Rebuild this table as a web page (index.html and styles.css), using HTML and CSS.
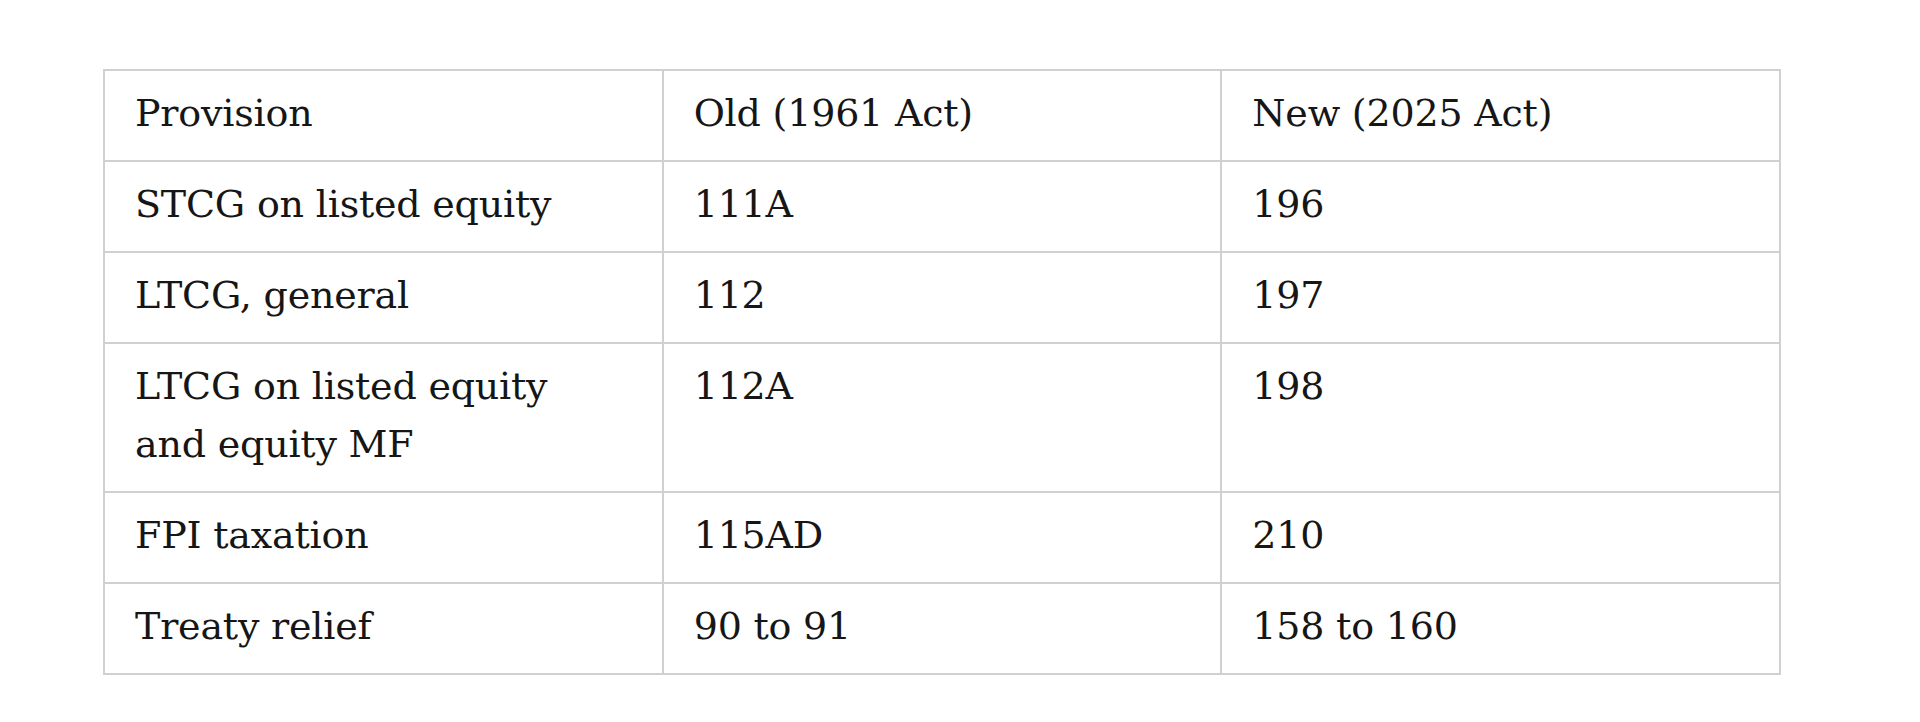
FILE: index.html
```html
<!DOCTYPE html>
<html lang="en">
<head>
<meta charset="utf-8">
<title>Provision mapping</title>
<link rel="stylesheet" href="styles.css">
</head>
<body>
<table class="map">
  <colgroup><col><col><col></colgroup>
  <thead>
    <tr><th>Provision</th><th>Old (1961 Act)</th><th>New (2025 Act)</th></tr>
  </thead>
  <tbody>
    <tr><td>STCG on listed equity</td><td>111A</td><td>196</td></tr>
    <tr><td>LTCG, general</td><td>112</td><td>197</td></tr>
    <tr><td>LTCG on listed equity and equity MF</td><td>112A</td><td>198</td></tr>
    <tr><td>FPI taxation</td><td>115AD</td><td>210</td></tr>
    <tr><td>Treaty relief</td><td>90 to 91</td><td>158 to 160</td></tr>
  </tbody>
</table>
</body>
</html>
```
FILE: styles.css
```css
html, body {
  margin: 0;
  padding: 0;
  background: #ffffff;
}
body {
  font-family: "DejaVu Serif", "Liberation Serif", serif;
  color: #161616;
}
.map {
  margin: 69px 0 0 103px;
  width: 1678px;
  table-layout: fixed;
  border-collapse: collapse;
  font-size: 38px;
  line-height: 58px;
}
.map th,
.map td {
  border: 2px solid #d0d0d0;
  padding: 13px 60px 18px 30px;
  text-align: left;
  vertical-align: top;
  font-weight: normal;
  letter-spacing: -0.2px;
}
```
